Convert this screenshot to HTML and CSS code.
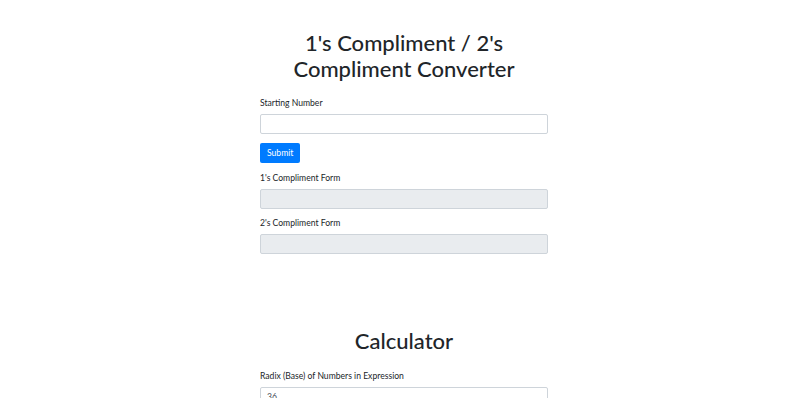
FILE: index.html
```html
<!DOCTYPE html>
<html>
  <head>
    <meta charset="utf-8" />
    <link rel="stylesheet" href="styles.css">
  </head>

  <body>
    <div class="container">
      <section class="converter">
        <h1>1's Compliment / 2's Compliment Converter</h1>
        <form>
          <div class="form-group">
            <label for="start">Starting Number</label>
            <input type="text" id="start" class="form-control" />
          </div>
          <button type="button" class="btn">Submit</button>
          <div class="form-group result">
            <label for="ones">1's Compliment Form</label>
            <input type="text" id="ones" class="form-control" disabled />
          </div>
          <div class="form-group">
            <label for="twos">2's Compliment Form</label>
            <input type="text" id="twos" class="form-control" disabled />
          </div>
        </form>
      </section>

      <section class="calculator">
        <h1>Calculator</h1>
        <div class="form-group">
          <label for="radix">Radix (Base) of Numbers in Expression</label>
          <input type="text" id="radix" class="form-control" value="36" />
        </div>
      </section>
    </div>
  </body>
</html>
```

FILE: styles.css
```css
html,
body {
  margin: 0;
  padding: 0;
  background: #fff;
}

body {
  padding-left: 2px;
  font-family: Lato, "Open Sans", sans-serif;
  color: #212529;
  font-size: 8.6px;
  line-height: 14px;
}

.container {
  width: 288px;
  margin: 0 auto;
}

h1 {
  font-size: 22px;
  font-weight: 500;
  line-height: 26px;
  text-align: center;
  margin: 0;
}

.converter h1 {
  padding-top: 30px;
  margin-bottom: 14px;
}

.calculator {
  padding-top: 67px;
}
.calculator h1 {
  margin-bottom: 15px;
}

.form-group {
  margin-bottom: 7px;
}
.form-group:first-child {
  margin-bottom: 9px;
}
.form-group label {
  display: block;
  margin-bottom: 4px;
}
.result {
  margin-top: 8px;
}

.form-control {
  display: block;
  box-sizing: border-box;
  width: 100%;
  height: 20px;
  padding: 2px 6px;
  font: inherit;
  color: #495057;
  background: #fff;
  border: 1px solid #ced4da;
  border-radius: 2px;
  outline: none;
}
.form-control[disabled] {
  background: #e9ecef;
}

.btn {
  display: block;
  height: 20px;
  padding: 0 7px;
  font: inherit;
  color: #fff;
  background: #007bff;
  border: 0;
  border-radius: 2px;
  cursor: pointer;
}
```
